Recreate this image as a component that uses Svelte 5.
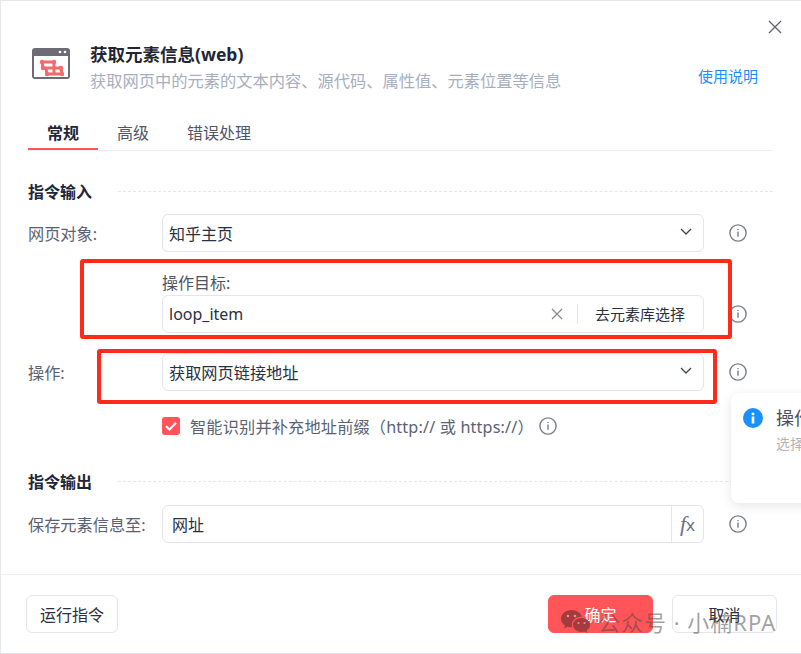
<script>
  const info = 'M9 5v1M9 7.600v5.200';
</script>

{#snippet infoIcon()}
  <svg class="info" width="18" height="18" viewBox="0 0 18 18" fill="none" stroke="#7b7f8b" stroke-width="1.4"><circle cx="9" cy="9" r="8.100"/><path d={info}/></svg>
{/snippet}
{#snippet chevron()}
  <svg class="chev" width="12" height="8" viewBox="0 0 12 8" fill="none" stroke="#3c4456" stroke-width="1.3"><path d="M1 1l5 5 5-5"/></svg>
{/snippet}

<div class="dialog">
  <button class="close" aria-label="关闭">
    <svg width="14" height="14" viewBox="0 0 14 14" stroke="#5c6270" stroke-width="1.3"><path d="M1 1l12 12M13 1L1 13"/></svg>
  </button>

  <header class="head">
    <svg class="logo" width="38" height="31" viewBox="0 0 38 31">
      <rect x="0" y="0" width="38" height="31" rx="3" fill="#6d6c76"/>
      <rect x="2" y="8" width="34" height="21" fill="#fff"/>
      <circle cx="28" cy="4" r="1.300" fill="#fff"/><circle cx="33" cy="4" r="1.300" fill="#fff"/>
      <g fill="none" stroke="#f76a6c" stroke-width="3">
        <path d="M10 14h12v12M10 14l1 6h18l1 6H15l-1-6"/>
      </g>
      <g fill="#f76a6c"><circle cx="10" cy="14" r="2.200"/><circle cx="22" cy="14" r="2.200"/><circle cx="11" cy="20" r="2.200"/><circle cx="29" cy="20" r="2.200"/><circle cx="30" cy="26" r="2.200"/><circle cx="15" cy="26" r="2.200"/></g>
    </svg>
    <div class="head-text">
      <h1>获取元素信息(web)</h1>
      <p>获取网页中的元素的文本内容、源代码、属性值、元素位置等信息</p>
    </div>
    <a class="help" href="#help">使用说明</a>
  </header>

  <nav class="tabs">
    <span class="tab active">常规</span>
    <span class="tab">高级</span>
    <span class="tab">错误处理</span>
  </nav>

  <div class="section first"><h2>指令输入</h2><i></i></div>

  <div class="row r1">
    <span class="label">网页对象:</span>
    <div class="field select">知乎主页{@render chevron()}</div>
    {@render infoIcon()}
  </div>

  <div class="sub-label">操作目标:</div>
  <div class="row r2">
    <span class="label"></span>
    <div class="field target">
      <span class="grow">loop_item</span>
      <svg class="clear" width="12" height="12" viewBox="0 0 12 12" stroke="#85888f" stroke-width="1.2"><path d="M1 1l10 10M11 1L1 11"/></svg>
      <span class="vline"></span>
      <span class="pick">去元素库选择</span>
    </div>
    {@render infoIcon()}
  </div>

  <div class="row r3">
    <span class="label">操作:</span>
    <div class="field select op">获取网页链接地址{@render chevron()}</div>
    {@render infoIcon()}
  </div>

  <div class="check">
    <span class="box"><svg width="18" height="18" viewBox="0 0 18 18" fill="none" stroke="#fff" stroke-width="2.200"><path d="M4 9.200l3.500 3.300L14 5.800"/></svg></span>
    <span class="check-text">智能识别并补充地址前缀（http:// 或 https://）</span>
    {@render infoIcon()}
  </div>

  <div class="section second"><h2>指令输出</h2><i></i></div>

  <div class="row r4">
    <span class="label">保存元素信息至:</span>
    <div class="field output">
      <span class="grow pad">网址</span>
      <span class="fx"><em>f</em>x</span>
    </div>
    {@render infoIcon()}
  </div>

  <footer class="foot">
    <button class="btn run">运行指令</button>
    <span class="grow"></span>
    <button class="btn primary">确定</button>
    <button class="btn cancel">取消</button>
  </footer>

  <div class="mark m1"></div>
  <div class="mark m2"></div>

  <aside class="toast">
    <svg width="20" height="20" viewBox="0 0 20 20"><circle cx="10" cy="10" r="10" fill="#1890ff"/><rect x="8.700" y="8.500" width="2.600" height="7" fill="#fff"/><rect x="8.700" y="4.700" width="2.600" height="2.500" fill="#fff"/></svg>
    <div class="toast-text"><b>操作目标</b><span>选择元素</span></div>
  </aside>

  <div class="water">
    <svg width="31" height="26" viewBox="0 0 31 26">
      <path d="M11.500 1C5.700 1 1 5 1 9.800c0 2.800 1.500 5 4 6.700l-1 3 3.500-1.800c1.300.4 2.600.6 4 .6h.8c-.3-.9-.4-1.700-.4-2.500 0-4.500 4.200-8 9.500-8h.7C21 4 16.700 1 11.500 1z" fill="#a43c3e"/>
      <path d="M30 16c0-4-4-7-8.500-7S13 12 13 16s4 7 8.500 7c1 0 2-.2 3-.5l2.800 1.500-.8-2.500c2.500-1.500 3.500-3.500 3.500-5.500z" fill="#a43c3e"/>
      <g fill="#f08a8c"><circle cx="8" cy="7" r="1.300"/><circle cx="15" cy="7" r="1.300"/><circle cx="18.500" cy="14" r="1.100"/><circle cx="24.500" cy="14" r="1.100"/></g>
    </svg>
    <span>公众号 · 小楠RPA</span>
  </div>
</div>

<style>
  :global(body) { margin: 0; background: #fff; }
  .dialog {
    position: relative; box-sizing: border-box; width: 801px; height: 654px; overflow: hidden;
    border: 1px solid #e6e8ee; border-right: 0; background: #fff;
    padding: 0 0 0 27px;
    font-family: "Noto Sans", "Noto Sans CJK SC", sans-serif; color: #2a3040; font-size: 16px;
  }
  .close { position: absolute; top: 19px; right: 19px; padding: 0; border: 0; background: none; width: 14px; height: 14px; display: flex; }
  .head { display: flex; align-items: flex-start; height: 121px; box-sizing: border-box; padding: 42px 43px 0 4px; }
  .logo { margin-top: 5px; flex: none; }
  .head-text { margin-left: 21px; flex: 1; }
  h1 { margin: 0 0 0 -1px; font-size: 17.500px; line-height: 22px; font-weight: 700; color: #1f2635; }
  .head-text p { margin: 4px 0 0 -1px; font-size: 16.250px; line-height: 24px; color: #a7aebf; white-space: nowrap; }
  .help { font-size: 15px; line-height: 20px; color: #1e8cfa; text-decoration: none; margin-top: 23px; }
  .tabs { display: flex; width: 745px; height: 28px; border-bottom: 1px solid #eceef3; }
  .tab { padding: 0 19px; width: 32px; white-space: nowrap; line-height: 22px; color: #4f5667; text-align: left; }
  .tab:nth-child(3) { width: 64px; }
  .tab.active { font-weight: 600; color: #1f2635; box-shadow: inset 0 -2px 0 #ff5558; height: 28px; }
  .section { display: flex; align-items: center; width: 745px; height: 24px; }
  .section.first { margin-top: 29px; }
  .section.second { margin-top: 35px; }
  h2 { margin: 0; font-size: 16px; line-height: 24px; font-weight: 600; color: #1f2635; width: 90px; flex: none; }
  .section i { flex: 1; border-top: 1px dashed #e4e6eb; margin-top: -2px; }
  .row { display: flex; align-items: center; width: 746px; height: 38px; }
  .r1 { margin-top: 10px; }
  .r2 { margin-top: 1px; }
  .r3 { margin-top: 20px; }
  .r4 { margin-top: 11px; }
  .label { width: 134px; flex: none; font-size: 16.200px; color: #5a6275; white-space: nowrap; }
  .field { box-sizing: border-box; width: 542px; height: 38px; flex: none; display: flex; align-items: center; justify-content: space-between; border: 1px solid #e4e6ec; border-radius: 6px; padding: 0 11px 0 6px; line-height: 36px; color: #2a3040; }
  .select { padding-top: 2px; }
  .op { font-size: 16.200px; }
  .chev { margin-top: -4px; }
  .info { margin-left: 25px; flex: none; }
  .sub-label { margin: 21px 0 0 134px; font-size: 16px; line-height: 21px; color: #4d5466; }
  .r2 .field { padding: 0 18px 0 6px; justify-content: flex-start; }
  .grow { flex: 1; }
  .clear { flex: none; }
  .vline { width: 1px; height: 20px; background: #e4e6ec; margin: 0 17px 0 14px; }
  .pick { font-size: 15px; color: #2a3040; }
  .check { display: flex; align-items: center; margin: 26px 0 0 134px; height: 18px; }
  .box { width: 18px; height: 18px; border-radius: 3px; background: #ff5558; display: flex; flex: none; }
  .check-text { margin-left: 10px; font-size: 16.200px; letter-spacing: .16px; color: #5a6275; white-space: nowrap; }
  .check .info { margin-left: 5px; }
  .output { padding: 0; }
  .pad { padding: 2px 0 0 9px; }
  .fx { width: 31px; height: 36px; border-left: 1px solid #e4e6ec; text-align: center; font-size: 17px; color: #6b7080; flex: none; }
  .fx em { font-family: "Liberation Serif", serif; font-style: italic; font-size: 22px; }
  .foot { position: absolute; left: 0; right: 0; top: 573px; height: 79px; border-top: 1px solid #eceef3; display: flex; align-items: flex-start; box-sizing: border-box; padding: 20px 24px 0 25px; }
  .btn { box-sizing: border-box; height: 38px; border: 1px solid #e4e6ec; border-radius: 6px; background: #fff; font: inherit; font-size: 16px; color: #2a3040; padding: 0; }
  .run { width: 92px; }
  .primary { width: 105px; background: #ff5558; border-color: #ff5558; color: #fff; }
  .cancel { width: 105px; margin-left: 19px; }
  .mark { position: absolute; border: 4px solid #ff2a1a; border-radius: 3px; box-sizing: border-box; pointer-events: none; }
  .m1 { left: 79px; top: 258px; width: 652px; height: 80px; }
  .m2 { left: 96px; top: 348px; width: 620px; height: 55px; }
  .toast { position: absolute; left: 730px; top: 392px; width: 300px; height: 110px; box-sizing: border-box; background: #fff; border-radius: 8px; box-shadow: 0 3px 12px rgba(0,0,0,.10); display: flex; padding: 15px 12px; gap: 13px; }
  .toast svg { flex: none; }
  .toast-text { display: flex; flex-direction: column; }
  .toast-text b { font-weight: 400; font-size: 18px; line-height: 20px; color: #4a4f5c; white-space: nowrap; }
  .toast-text span { font-size: 14px; line-height: 20px; margin-top: 6px; color: #b4b4b4; white-space: nowrap; }
  .water { position: absolute; left: 559px; top: 608px; display: flex; align-items: center; gap: 7px; pointer-events: none; }
  .water span { font-size: 22px; line-height: 26px; color: rgba(70,70,70,.5); white-space: nowrap; letter-spacing: 1px; margin-top: -1px; }
</style>
